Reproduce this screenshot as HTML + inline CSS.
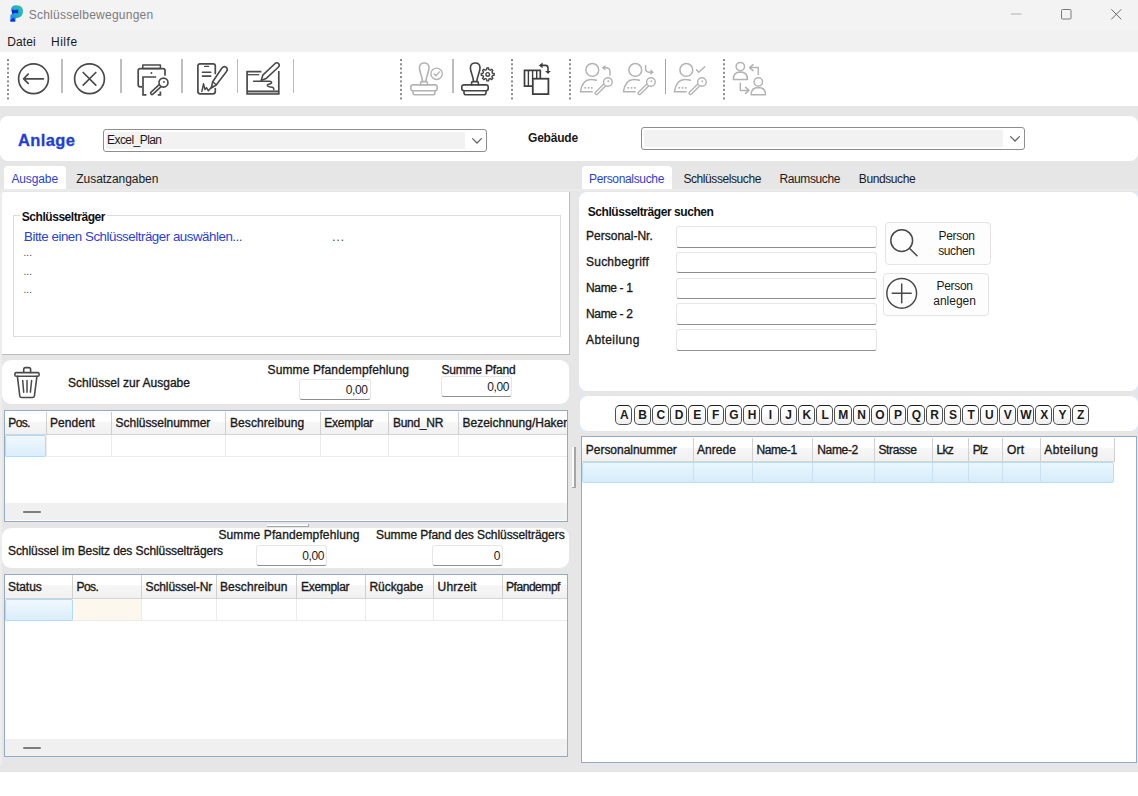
<!DOCTYPE html>
<html lang="de"><head><meta charset="utf-8"><title>Schlüsselbewegungen</title><style>
html,body{margin:0;padding:0;background:#fff;}
body{width:1138px;height:796px;position:relative;overflow:hidden;font-family:'Liberation Sans', sans-serif;}
#app div,#app span,#app svg{position:absolute;box-sizing:border-box;}
#app span{white-space:nowrap;line-height:1;}
#app svg{overflow:visible;}
</style></head><body><div id="app">
<div style="left:0px;top:0px;width:1138px;height:52px;background:#f3f3f3;"></div>
<div style="left:0px;top:30.8px;width:1138px;height:21.2px;background:#f1f1f1;"></div>
<div style="left:0px;top:52px;width:1138px;height:53.5px;background:#fff;"></div>
<div style="left:0px;top:105.5px;width:1138px;height:666.2px;background:#e6e6e6;"></div>
<div style="left:61.05px;top:58.6px;width:1.5px;height:34.9px;background:#bdbdbd;"></div>
<div style="left:120.15px;top:58.6px;width:1.5px;height:34.9px;background:#bdbdbd;"></div>
<div style="left:181.25px;top:58.6px;width:1.5px;height:34.9px;background:#bdbdbd;"></div>
<div style="left:236.85px;top:58.6px;width:1.5px;height:34.9px;background:#bdbdbd;"></div>
<div style="left:292.75px;top:58.6px;width:1.5px;height:34.9px;background:#bdbdbd;"></div>
<div style="left:452.45px;top:58.6px;width:1.5px;height:34.9px;background:#bdbdbd;"></div>
<div style="left:664.6px;top:58.8px;width:1.3px;height:35px;background:#a4a4a4;"></div>
<div style="left:0px;top:116.2px;width:1138px;height:45px;background:#fff;border-radius:8px;"></div>
<div style="left:103px;top:129.1px;width:383.9px;height:22.8px;background:#fff;border:1.3px solid #8e8e8e;border-radius:3px;"></div>
<div style="left:106.3px;top:132.4px;width:358.9px;height:16.200000000000003px;background:#f2f2f2;"></div>
<div style="left:641px;top:127.05px;width:383.9px;height:22.8px;background:#fff;border:1.3px solid #8e8e8e;border-radius:3px;"></div>
<div style="left:644.3px;top:130.35px;width:358.9000000000001px;height:16.200000000000003px;background:#f2f2f2;"></div>
<div style="left:4.4px;top:166px;width:61.4px;height:23.3px;background:#fff;border-radius:4px 4px 0 0;"></div>
<div style="left:0px;top:189.3px;width:1138px;height:2.2px;background:#ebebeb;"></div>
<div style="left:0px;top:191.5px;width:2.4px;height:573px;background:#ededed;"></div>
<div style="left:2px;top:191.5px;width:567.5px;height:163px;background:#fff;border-right:1.5px solid #bdbdbd;border-bottom:1.5px solid #bdbdbd;border-radius:2px 0 0 0;"></div>
<div style="left:13px;top:215px;width:548px;height:122px;border:1px solid #dcdcdc;"></div>
<div style="left:20px;top:212px;width:87px;height:10px;background:#fff;"></div>
<div style="left:2px;top:360px;width:567px;height:44px;background:#fff;border-radius:9px;"></div>
<div style="left:299px;top:378.8px;width:71.5px;height:21.5px;background:#fff;border:1.2px solid #e6e6e6;border-bottom:1.4px solid #8e8e8e;border-radius:3px;"></div>
<div style="left:440.8px;top:376px;width:71px;height:20.5px;background:#fff;border:1.2px solid #e6e6e6;border-bottom:1.4px solid #8e8e8e;border-radius:3px;"></div>
<div style="left:3.7px;top:410.3px;width:564.5px;height:111.4px;background:#fff;border:1.3px solid #93abc9;"></div>
<div style="left:5px;top:411.5px;width:562px;height:23px;background:linear-gradient(#ffffff 0%,#ffffff 42%,#f6f6f6 46%,#f1f1f1 100%);border-bottom:1px solid #d4d4d4;"></div>
<div style="left:5px;top:455.5px;width:562px;height:1px;background:#ececec;"></div>
<div style="left:45.5px;top:411.5px;width:1px;height:23px;background:#d0d0d0;"></div>
<div style="left:45.5px;top:434.5px;width:1px;height:22px;background:#ececec;"></div>
<div style="left:110.8px;top:411.5px;width:1px;height:23px;background:#d0d0d0;"></div>
<div style="left:110.8px;top:434.5px;width:1px;height:22px;background:#ececec;"></div>
<div style="left:225.1px;top:411.5px;width:1px;height:23px;background:#d0d0d0;"></div>
<div style="left:225.1px;top:434.5px;width:1px;height:22px;background:#ececec;"></div>
<div style="left:319.5px;top:411.5px;width:1px;height:23px;background:#d0d0d0;"></div>
<div style="left:319.5px;top:434.5px;width:1px;height:22px;background:#ececec;"></div>
<div style="left:387.9px;top:411.5px;width:1px;height:23px;background:#d0d0d0;"></div>
<div style="left:387.9px;top:434.5px;width:1px;height:22px;background:#ececec;"></div>
<div style="left:458.0px;top:411.5px;width:1px;height:23px;background:#d0d0d0;"></div>
<div style="left:458.0px;top:434.5px;width:1px;height:22px;background:#ececec;"></div>
<div style="left:5px;top:434.5px;width:40.5px;height:22px;background:linear-gradient(#eff8fe,#dbeefb);border:1px solid #b0dbf5;border-radius:2px;"></div>
<div style="left:5px;top:502.9px;width:562px;height:17.6px;background:#f0f0f0;"></div>
<div style="left:23px;top:511.1px;width:18.2px;height:2px;background:#7e7e7e;border-radius:1px;"></div>
<div style="left:267px;top:524.1px;width:41.8px;height:2.7px;background:#a6a6a6;"></div>
<div style="left:267px;top:524.1px;width:40.6px;height:1.5px;background:#fafafa;"></div>
<div style="left:572px;top:446.9px;width:4.1px;height:40.9px;background:#a6a6a6;"></div>
<div style="left:572px;top:446.9px;width:2.3px;height:39.8px;background:#fafafa;"></div>
<div style="left:2px;top:527.8px;width:567px;height:40.4px;background:#fff;border-radius:9px;"></div>
<div style="left:256px;top:545px;width:71px;height:20.5px;background:#fff;border:1.2px solid #e6e6e6;border-bottom:1.4px solid #8e8e8e;border-radius:3px;"></div>
<div style="left:432px;top:545px;width:71px;height:20.5px;background:#fff;border:1.2px solid #e6e6e6;border-bottom:1.4px solid #8e8e8e;border-radius:3px;"></div>
<div style="left:3.7px;top:574.0999999999999px;width:564.5px;height:183.4px;background:#fff;border:1.3px solid #93abc9;"></div>
<div style="left:5px;top:575.3px;width:562px;height:23.5px;background:linear-gradient(#ffffff 0%,#ffffff 42%,#f6f6f6 46%,#f1f1f1 100%);border-bottom:1px solid #d4d4d4;"></div>
<div style="left:5px;top:619.8px;width:562px;height:1px;background:#ececec;"></div>
<div style="left:73px;top:598.8px;width:67.5px;height:21px;background:#fdf8ee;"></div>
<div style="left:72.0px;top:575.3px;width:1px;height:23.5px;background:#d0d0d0;"></div>
<div style="left:72.0px;top:598.8px;width:1px;height:22px;background:#ececec;"></div>
<div style="left:140.5px;top:575.3px;width:1px;height:23.5px;background:#d0d0d0;"></div>
<div style="left:140.5px;top:598.8px;width:1px;height:22px;background:#ececec;"></div>
<div style="left:215.8px;top:575.3px;width:1px;height:23.5px;background:#d0d0d0;"></div>
<div style="left:215.8px;top:598.8px;width:1px;height:22px;background:#ececec;"></div>
<div style="left:296.3px;top:575.3px;width:1px;height:23.5px;background:#d0d0d0;"></div>
<div style="left:296.3px;top:598.8px;width:1px;height:22px;background:#ececec;"></div>
<div style="left:364.8px;top:575.3px;width:1px;height:23.5px;background:#d0d0d0;"></div>
<div style="left:364.8px;top:598.8px;width:1px;height:22px;background:#ececec;"></div>
<div style="left:433.2px;top:575.3px;width:1px;height:23.5px;background:#d0d0d0;"></div>
<div style="left:433.2px;top:598.8px;width:1px;height:22px;background:#ececec;"></div>
<div style="left:501.7px;top:575.3px;width:1px;height:23.5px;background:#d0d0d0;"></div>
<div style="left:501.7px;top:598.8px;width:1px;height:22px;background:#ececec;"></div>
<div style="left:5px;top:598.8px;width:67.5px;height:22px;background:linear-gradient(#eff8fe,#dbeefb);border:1px solid #b0dbf5;border-radius:2px;"></div>
<div style="left:5px;top:738.6999999999999px;width:562px;height:17.6px;background:#f0f0f0;"></div>
<div style="left:23px;top:746.9px;width:18.2px;height:2px;background:#7e7e7e;border-radius:1px;"></div>
<div style="left:582.4px;top:166px;width:89.6px;height:23.3px;background:#fff;border-radius:4px 4px 0 0;"></div>
<div style="left:579.3px;top:191.5px;width:558.7px;height:199.6px;background:#dde9f8;"></div>
<div style="left:579.3px;top:191.5px;width:558.7px;height:199.6px;background:#fff;border-radius:8px;"></div>
<div style="left:676px;top:225.8px;width:201.3px;height:21.8px;background:#fff;border:1.2px solid #e6e6e6;border-bottom:1.4px solid #8e8e8e;border-radius:3px;"></div>
<div style="left:676px;top:251.65px;width:201.3px;height:21.8px;background:#fff;border:1.2px solid #e6e6e6;border-bottom:1.4px solid #8e8e8e;border-radius:3px;"></div>
<div style="left:676px;top:277.5px;width:201.3px;height:21.8px;background:#fff;border:1.2px solid #e6e6e6;border-bottom:1.4px solid #8e8e8e;border-radius:3px;"></div>
<div style="left:676px;top:303.35px;width:201.3px;height:21.8px;background:#fff;border:1.2px solid #e6e6e6;border-bottom:1.4px solid #8e8e8e;border-radius:3px;"></div>
<div style="left:676px;top:329.20000000000005px;width:201.3px;height:21.8px;background:#fff;border:1.2px solid #e6e6e6;border-bottom:1.4px solid #8e8e8e;border-radius:3px;"></div>
<div style="left:884.7px;top:222.4px;width:106.5px;height:42.6px;background:#fdfdfd;border:1px solid #e4e4e4;border-radius:4px;"></div>
<div style="left:882.6px;top:272.5px;width:106.2px;height:43px;background:#fdfdfd;border:1px solid #e4e4e4;border-radius:4px;"></div>
<div style="left:579.8px;top:396.1px;width:558.2px;height:34.6px;background:#dde9f8;"></div>
<div style="left:579.8px;top:396.1px;width:558.2px;height:34.6px;background:#fff;border-radius:8px;"></div>
<div style="left:615.3px;top:404.7px;width:17.2px;height:20.4px;background:linear-gradient(#ffffff 30%,#eeeeee);border:1.5px solid #505050;border-top-color:#1c1c1c;border-radius:5px;"></div>
<div style="left:633.55px;top:404.7px;width:17.2px;height:20.4px;background:linear-gradient(#ffffff 30%,#eeeeee);border:1.5px solid #505050;border-top-color:#1c1c1c;border-radius:5px;"></div>
<div style="left:651.81px;top:404.7px;width:17.2px;height:20.4px;background:linear-gradient(#ffffff 30%,#eeeeee);border:1.5px solid #505050;border-top-color:#1c1c1c;border-radius:5px;"></div>
<div style="left:670.06px;top:404.7px;width:17.2px;height:20.4px;background:linear-gradient(#ffffff 30%,#eeeeee);border:1.5px solid #505050;border-top-color:#1c1c1c;border-radius:5px;"></div>
<div style="left:688.32px;top:404.7px;width:17.2px;height:20.4px;background:linear-gradient(#ffffff 30%,#eeeeee);border:1.5px solid #505050;border-top-color:#1c1c1c;border-radius:5px;"></div>
<div style="left:706.57px;top:404.7px;width:17.2px;height:20.4px;background:linear-gradient(#ffffff 30%,#eeeeee);border:1.5px solid #505050;border-top-color:#1c1c1c;border-radius:5px;"></div>
<div style="left:724.83px;top:404.7px;width:17.2px;height:20.4px;background:linear-gradient(#ffffff 30%,#eeeeee);border:1.5px solid #505050;border-top-color:#1c1c1c;border-radius:5px;"></div>
<div style="left:743.08px;top:404.7px;width:17.2px;height:20.4px;background:linear-gradient(#ffffff 30%,#eeeeee);border:1.5px solid #505050;border-top-color:#1c1c1c;border-radius:5px;"></div>
<div style="left:761.34px;top:404.7px;width:17.2px;height:20.4px;background:linear-gradient(#ffffff 30%,#eeeeee);border:1.5px solid #505050;border-top-color:#1c1c1c;border-radius:5px;"></div>
<div style="left:779.59px;top:404.7px;width:17.2px;height:20.4px;background:linear-gradient(#ffffff 30%,#eeeeee);border:1.5px solid #505050;border-top-color:#1c1c1c;border-radius:5px;"></div>
<div style="left:797.85px;top:404.7px;width:17.2px;height:20.4px;background:linear-gradient(#ffffff 30%,#eeeeee);border:1.5px solid #505050;border-top-color:#1c1c1c;border-radius:5px;"></div>
<div style="left:816.1px;top:404.7px;width:17.2px;height:20.4px;background:linear-gradient(#ffffff 30%,#eeeeee);border:1.5px solid #505050;border-top-color:#1c1c1c;border-radius:5px;"></div>
<div style="left:834.36px;top:404.7px;width:17.2px;height:20.4px;background:linear-gradient(#ffffff 30%,#eeeeee);border:1.5px solid #505050;border-top-color:#1c1c1c;border-radius:5px;"></div>
<div style="left:852.62px;top:404.7px;width:17.2px;height:20.4px;background:linear-gradient(#ffffff 30%,#eeeeee);border:1.5px solid #505050;border-top-color:#1c1c1c;border-radius:5px;"></div>
<div style="left:870.87px;top:404.7px;width:17.2px;height:20.4px;background:linear-gradient(#ffffff 30%,#eeeeee);border:1.5px solid #505050;border-top-color:#1c1c1c;border-radius:5px;"></div>
<div style="left:889.12px;top:404.7px;width:17.2px;height:20.4px;background:linear-gradient(#ffffff 30%,#eeeeee);border:1.5px solid #505050;border-top-color:#1c1c1c;border-radius:5px;"></div>
<div style="left:907.38px;top:404.7px;width:17.2px;height:20.4px;background:linear-gradient(#ffffff 30%,#eeeeee);border:1.5px solid #505050;border-top-color:#1c1c1c;border-radius:5px;"></div>
<div style="left:925.63px;top:404.7px;width:17.2px;height:20.4px;background:linear-gradient(#ffffff 30%,#eeeeee);border:1.5px solid #505050;border-top-color:#1c1c1c;border-radius:5px;"></div>
<div style="left:943.89px;top:404.7px;width:17.2px;height:20.4px;background:linear-gradient(#ffffff 30%,#eeeeee);border:1.5px solid #505050;border-top-color:#1c1c1c;border-radius:5px;"></div>
<div style="left:962.14px;top:404.7px;width:17.2px;height:20.4px;background:linear-gradient(#ffffff 30%,#eeeeee);border:1.5px solid #505050;border-top-color:#1c1c1c;border-radius:5px;"></div>
<div style="left:980.4px;top:404.7px;width:17.2px;height:20.4px;background:linear-gradient(#ffffff 30%,#eeeeee);border:1.5px solid #505050;border-top-color:#1c1c1c;border-radius:5px;"></div>
<div style="left:998.65px;top:404.7px;width:17.2px;height:20.4px;background:linear-gradient(#ffffff 30%,#eeeeee);border:1.5px solid #505050;border-top-color:#1c1c1c;border-radius:5px;"></div>
<div style="left:1016.91px;top:404.7px;width:17.2px;height:20.4px;background:linear-gradient(#ffffff 30%,#eeeeee);border:1.5px solid #505050;border-top-color:#1c1c1c;border-radius:5px;"></div>
<div style="left:1035.16px;top:404.7px;width:17.2px;height:20.4px;background:linear-gradient(#ffffff 30%,#eeeeee);border:1.5px solid #505050;border-top-color:#1c1c1c;border-radius:5px;"></div>
<div style="left:1053.42px;top:404.7px;width:17.2px;height:20.4px;background:linear-gradient(#ffffff 30%,#eeeeee);border:1.5px solid #505050;border-top-color:#1c1c1c;border-radius:5px;"></div>
<div style="left:1071.67px;top:404.7px;width:17.2px;height:20.4px;background:linear-gradient(#ffffff 30%,#eeeeee);border:1.5px solid #505050;border-top-color:#1c1c1c;border-radius:5px;"></div>
<div style="left:580.7px;top:436.40000000000003px;width:556.5px;height:326.4px;background:#fff;border:1.3px solid #93abc9;"></div>
<div style="left:582px;top:437.6px;width:532px;height:24px;background:linear-gradient(#ffffff 0%,#ffffff 42%,#f6f6f6 46%,#f1f1f1 100%);border-bottom:1px solid #d4d4d4;"></div>
<div style="left:582px;top:461.6px;width:532px;height:21px;background:linear-gradient(#eaf6fd,#d6ecfa);border:1px solid #b6def5;border-radius:2px;"></div>
<div style="left:692.5px;top:437.6px;width:1px;height:24px;background:#d0d0d0;"></div>
<div style="left:692.5px;top:461.6px;width:1px;height:21px;background:#c8e2f3;"></div>
<div style="left:751.5px;top:437.6px;width:1px;height:24px;background:#d0d0d0;"></div>
<div style="left:751.5px;top:461.6px;width:1px;height:21px;background:#c8e2f3;"></div>
<div style="left:812.3px;top:437.6px;width:1px;height:24px;background:#d0d0d0;"></div>
<div style="left:812.3px;top:461.6px;width:1px;height:21px;background:#c8e2f3;"></div>
<div style="left:873.5px;top:437.6px;width:1px;height:24px;background:#d0d0d0;"></div>
<div style="left:873.5px;top:461.6px;width:1px;height:21px;background:#c8e2f3;"></div>
<div style="left:931.7px;top:437.6px;width:1px;height:24px;background:#d0d0d0;"></div>
<div style="left:931.7px;top:461.6px;width:1px;height:21px;background:#c8e2f3;"></div>
<div style="left:967.8px;top:437.6px;width:1px;height:24px;background:#d0d0d0;"></div>
<div style="left:967.8px;top:461.6px;width:1px;height:21px;background:#c8e2f3;"></div>
<div style="left:1001.8px;top:437.6px;width:1px;height:24px;background:#d0d0d0;"></div>
<div style="left:1001.8px;top:461.6px;width:1px;height:21px;background:#c8e2f3;"></div>
<div style="left:1039.8px;top:437.6px;width:1px;height:24px;background:#d0d0d0;"></div>
<div style="left:1039.8px;top:461.6px;width:1px;height:21px;background:#c8e2f3;"></div>
<div style="left:1113.5px;top:437.6px;width:1px;height:24px;background:#d0d0d0;"></div>
<svg style="left:9.5px;top:4.5px" width="14" height="18" viewBox="0 0 14 18" ><defs><linearGradient id="pg" x1="1" y1="0" x2="0" y2="1"><stop offset="0" stop-color="#35c4a0"/><stop offset="0.45" stop-color="#25b0c0"/><stop offset="0.8" stop-color="#1c90ec"/><stop offset="1" stop-color="#1a6cf0"/></linearGradient></defs>
<g transform="scale(0.955 0.955)"><path d="M1.2 3.6 Q2 0.6 6 0.3 Q10.4 0 12.6 2.6 Q14.2 5 13.4 8.6 Q12.2 12.6 8.4 13.4 L6.2 13.6 L5.6 17.4 L0.4 17.4 L0.4 10.6 L2.2 9.4 Z" fill="url(#pg)"/>
<path d="M1.6 4.6 L4.6 5.2 L8.6 4.6 L8.6 8.6 L4.6 8.4 L2.4 9.6 Z" fill="#0d2be2"/>
<path d="M0.4 17.4 L5.6 17.4 L3.9 13.2 L0.4 16 Z" fill="#0d2be2"/></g></svg>
<svg style="left:1011px;top:13px" width="11" height="2" viewBox="0 0 11 2" ><path d="M0 1 H10.5" stroke="#b0b0b0" stroke-width="1"/></svg>
<svg style="left:1061px;top:9px" width="11" height="11" viewBox="0 0 11 11" ><rect x="0.5" y="0.5" width="9.5" height="9.5" rx="1" fill="none" stroke="#7a7a7a" stroke-width="1"/></svg>
<svg style="left:1111px;top:9px" width="11" height="11" viewBox="0 0 11 11" ><path d="M0.3 0.3 L10.3 10.3 M10.3 0.3 L0.3 10.3" stroke="#6a6a6a" stroke-width="1" fill="none"/></svg>
<svg style="left:6.8px;top:58.8px" width="2" height="41" viewBox="0 0 2 41" ><rect x="0" y="0.00" width="2" height="2" fill="#8c8c8c"/><rect x="0" y="4.27" width="2" height="2" fill="#8c8c8c"/><rect x="0" y="8.54" width="2" height="2" fill="#8c8c8c"/><rect x="0" y="12.81" width="2" height="2" fill="#8c8c8c"/><rect x="0" y="17.08" width="2" height="2" fill="#8c8c8c"/><rect x="0" y="21.35" width="2" height="2" fill="#8c8c8c"/><rect x="0" y="25.62" width="2" height="2" fill="#8c8c8c"/><rect x="0" y="29.89" width="2" height="2" fill="#8c8c8c"/><rect x="0" y="34.16" width="2" height="2" fill="#8c8c8c"/><rect x="0" y="38.43" width="2" height="2" fill="#8c8c8c"/></svg>
<svg style="left:400px;top:58.8px" width="2" height="41" viewBox="0 0 2 41" ><rect x="0" y="0.00" width="2" height="2" fill="#8c8c8c"/><rect x="0" y="4.27" width="2" height="2" fill="#8c8c8c"/><rect x="0" y="8.54" width="2" height="2" fill="#8c8c8c"/><rect x="0" y="12.81" width="2" height="2" fill="#8c8c8c"/><rect x="0" y="17.08" width="2" height="2" fill="#8c8c8c"/><rect x="0" y="21.35" width="2" height="2" fill="#8c8c8c"/><rect x="0" y="25.62" width="2" height="2" fill="#8c8c8c"/><rect x="0" y="29.89" width="2" height="2" fill="#8c8c8c"/><rect x="0" y="34.16" width="2" height="2" fill="#8c8c8c"/><rect x="0" y="38.43" width="2" height="2" fill="#8c8c8c"/></svg>
<svg style="left:510.6px;top:58.8px" width="2" height="41" viewBox="0 0 2 41" ><rect x="0" y="0.00" width="2" height="2" fill="#8c8c8c"/><rect x="0" y="4.27" width="2" height="2" fill="#8c8c8c"/><rect x="0" y="8.54" width="2" height="2" fill="#8c8c8c"/><rect x="0" y="12.81" width="2" height="2" fill="#8c8c8c"/><rect x="0" y="17.08" width="2" height="2" fill="#8c8c8c"/><rect x="0" y="21.35" width="2" height="2" fill="#8c8c8c"/><rect x="0" y="25.62" width="2" height="2" fill="#8c8c8c"/><rect x="0" y="29.89" width="2" height="2" fill="#8c8c8c"/><rect x="0" y="34.16" width="2" height="2" fill="#8c8c8c"/><rect x="0" y="38.43" width="2" height="2" fill="#8c8c8c"/></svg>
<svg style="left:569.2px;top:58.8px" width="2" height="41" viewBox="0 0 2 41" ><rect x="0" y="0.00" width="2" height="2" fill="#8c8c8c"/><rect x="0" y="4.27" width="2" height="2" fill="#8c8c8c"/><rect x="0" y="8.54" width="2" height="2" fill="#8c8c8c"/><rect x="0" y="12.81" width="2" height="2" fill="#8c8c8c"/><rect x="0" y="17.08" width="2" height="2" fill="#8c8c8c"/><rect x="0" y="21.35" width="2" height="2" fill="#8c8c8c"/><rect x="0" y="25.62" width="2" height="2" fill="#8c8c8c"/><rect x="0" y="29.89" width="2" height="2" fill="#8c8c8c"/><rect x="0" y="34.16" width="2" height="2" fill="#8c8c8c"/><rect x="0" y="38.43" width="2" height="2" fill="#8c8c8c"/></svg>
<svg style="left:722.6px;top:58.8px" width="2" height="41" viewBox="0 0 2 41" ><rect x="0" y="0.00" width="2" height="2" fill="#8c8c8c"/><rect x="0" y="4.27" width="2" height="2" fill="#8c8c8c"/><rect x="0" y="8.54" width="2" height="2" fill="#8c8c8c"/><rect x="0" y="12.81" width="2" height="2" fill="#8c8c8c"/><rect x="0" y="17.08" width="2" height="2" fill="#8c8c8c"/><rect x="0" y="21.35" width="2" height="2" fill="#8c8c8c"/><rect x="0" y="25.62" width="2" height="2" fill="#8c8c8c"/><rect x="0" y="29.89" width="2" height="2" fill="#8c8c8c"/><rect x="0" y="34.16" width="2" height="2" fill="#8c8c8c"/><rect x="0" y="38.43" width="2" height="2" fill="#8c8c8c"/></svg>
<svg style="left:17px;top:62px" width="34" height="34" viewBox="0 0 34 34" ><g fill="none" stroke="#4a4a4a" stroke-width="1.7" stroke-linecap="round" stroke-linejoin="round">
<circle cx="16.5" cy="16.8" r="14.9"/><path d="M6.6 16.8 H26.4 M11.2 12.2 L6.6 16.8 L11.2 21.4"/></g></svg>
<svg style="left:72.6px;top:62px" width="34" height="34" viewBox="0 0 34 34" ><g fill="none" stroke="#4a4a4a" stroke-width="1.7" stroke-linecap="round">
<circle cx="16.5" cy="16.8" r="14.9"/><path d="M10.2 10.5 L22.8 23.1 M22.8 10.5 L10.2 23.1"/></g></svg>
<svg style="left:136px;top:62px" width="36" height="36" viewBox="0 0 36 36" ><g fill="none" stroke="#4a4a4a" stroke-width="1.7" stroke-linejoin="round" stroke-linecap="round">
<rect x="6.8" y="3.0" width="17.6" height="3.4" stroke-width="1.5"/>
<path d="M5.6 24.8 H4.2 Q2.2 24.8 2.2 22.8 V8.6 Q2.2 6.6 4.2 6.6 H27 Q29 6.6 29 8.6 V13"/>
<circle cx="15.4" cy="11" r="0.95" fill="#4a4a4a" stroke="none"/>
<path d="M20.2 15 H7 V32.8 H10.4" stroke-linejoin="miter" stroke-linecap="butt"/>
<path d="M21.8 32.8 H24.4 V29.4" stroke-linejoin="miter" stroke-linecap="butt"/>
<path d="M25.51 22.42 L16.02 31.11" stroke="#4a4a4a" stroke-width="4.4" stroke-linecap="round"/><path d="M25.51 22.42 L16.02 31.11" stroke="#fff" stroke-width="1.20" stroke-linecap="round"/><circle cx="27.5" cy="20.6" r="4.5" fill="#fff" stroke="#4a4a4a" stroke-width="1.6"/><circle cx="27.9" cy="19.900000000000002" r="0.95" fill="#4a4a4a" stroke="none"/>
</g></svg>
<svg style="left:196px;top:61px" width="34" height="36" viewBox="0 0 34 36" ><g fill="none" stroke="#4a4a4a" stroke-width="1.7" stroke-linejoin="round" stroke-linecap="round">
<path d="M19.3 27.6 V30.6 Q19.3 32.9 17 32.9 H4.2 Q1.9 32.9 1.9 30.6 V5.1 Q1.9 2.8 4.2 2.8 H17 Q19.3 2.8 19.3 5.1 V12.4"/>
<path d="M8.6 5.4 H12.6" stroke-width="1.3"/>
<path d="M6.4 11.2 H14.8 M6.4 15.1 H14.8" stroke-width="1.6"/>
<path d="M5.9 30.4 L7.5 22.8 L9 28.6 L10.5 26.6 L12.4 29.8 L15.6 26" stroke-width="1.5"/>
<path d="M16.7 20.8 L26 7.0 Q27.8 4.7 30.1 6.1 Q32.2 7.9 30.7 10.3 L20.4 23.8 L15.3 27 Z" fill="#fff" stroke-width="1.6"/>
<path d="M16.7 20.8 L20.4 23.8" stroke-width="1.3"/>
</g></svg>
<svg style="left:245px;top:61px" width="36" height="36" viewBox="0 0 36 36" ><g fill="none" stroke="#4a4a4a" stroke-width="1.7" stroke-linejoin="miter" stroke-linecap="butt">
<rect x="2.1" y="30.2" width="31.7" height="2.9" fill="#b4b4b4" stroke="none"/>
<path d="M16.4 10.7 H2.1 V33 H33.8 V10"/>
<path d="M2.1 13.7 H14.2" stroke-width="1.3"/>
<path d="M2.1 30.2 H33.8" stroke-width="1.5"/>
<path d="M8.6 20.2 H24.4 Q27.2 20.4 26.4 22.2 Q25 23.3 23 23.5 Q21.6 24.3 23.2 25.4 Q25 26.2 27.4 26.2 Q29 26.8 28.8 28.6" stroke-width="1.5" stroke-linecap="round" stroke-linejoin="round"/>
<path d="M17.8 14.2 L30.1 2.5 Q32 1.0 33.6 2.6 Q35 4.4 33.5 6.0 L21 17.6 L16.2 19.4 Z" fill="#fff" stroke-width="1.6" stroke-linejoin="round"/>
</g></svg>
<svg style="left:410.2px;top:61px" width="36" height="36" viewBox="0 0 36 36" ><g fill="none" stroke="#b4b4b4" stroke-width="1.6" stroke-linejoin="round" stroke-linecap="round">
<path d="M12.5 20.4 C12.3 15 9.4 11 9.4 6.9 C9.4 3.5 11.6 2 14.2 2 C16.8 2 19 3.5 19 6.9 C19 11 16.1 15 15.9 20.4"/>
<path d="M10.6 24 V21.8 Q10.6 20.6 11.8 20.6 H16.2 Q17.4 20.6 17.4 21.8 V24"/>
<rect x="0.8" y="23.9" width="26.4" height="5.8" rx="2.2"/>
<path d="M3 30 V31.8 Q3 33.8 5 33.8 H23 Q25 33.8 25 31.8 V30"/>
<circle cx="26.6" cy="12.8" r="5.7" stroke-width="1.4"/><path d="M24.1 12.9 L26 14.8 L29.4 10.9" stroke-width="1.4"/>
</g></svg>
<svg style="left:461.3px;top:61px" width="36" height="36" viewBox="0 0 36 36" ><g fill="none" stroke="#454545" stroke-width="1.6" stroke-linejoin="round" stroke-linecap="round">
<path d="M12.5 20.4 C12.3 15 9.4 11 9.4 6.9 C9.4 3.5 11.6 2 14.2 2 C16.8 2 19 3.5 19 6.9 C19 11 16.1 15 15.9 20.4"/>
<path d="M10.6 24 V21.8 Q10.6 20.6 11.8 20.6 H16.2 Q17.4 20.6 17.4 21.8 V24"/>
<rect x="0.8" y="23.9" width="26.4" height="5.8" rx="2.2"/>
<path d="M3 30 V31.8 Q3 33.8 5 33.8 H23 Q25 33.8 25 31.8 V30"/>
<path d="M25.83 6.96 L27.57 6.96 L27.84 8.64 L29.26 9.22 L30.64 8.23 L31.87 9.46 L30.88 10.84 L31.46 12.26 L33.14 12.53 L33.14 14.27 L31.46 14.54 L30.88 15.96 L31.87 17.34 L30.64 18.57 L29.26 17.58 L27.84 18.16 L27.57 19.84 L25.83 19.84 L25.56 18.16 L24.14 17.58 L22.76 18.57 L21.53 17.34 L22.52 15.96 L21.94 14.54 L20.26 14.27 L20.26 12.53 L21.94 12.26 L22.52 10.84 L21.53 9.46 L22.76 8.23 L24.14 9.22 L25.56 8.64 Z" stroke-width="1.4"/><circle cx="26.7" cy="13.4" r="1.8" stroke-width="1.4"/>
</g></svg>
<svg style="left:523px;top:62px" width="30" height="36" viewBox="0 0 30 36" ><g fill="none" stroke="#3e3e3e" stroke-width="1.7" stroke-linejoin="miter">
<path d="M9.8 24.2 H1.5 V8.4 H17.3 V16.7"/>
<path d="M5.4 8.4 V24.2 M9.6 8.4 V16.7 M13.7 8.4 V16.7" stroke-width="1.4"/>
<rect x="9.8" y="16.7" width="15.6" height="15.4" fill="#fff" stroke-width="1.8"/>
<path d="M18.4 3.4 H22.4 Q25 3.4 25 6 V9.4" stroke-linecap="butt" stroke-width="1.6"/>
<path d="M15.8 3.4 L19.6 0.6 V6.2 Z M22.1 9 H27.9 L25 12 Z" fill="#3e3e3e" stroke="none"/>
</g></svg>
<svg style="left:578.8px;top:61px" width="36" height="36" viewBox="0 0 36 36" ><g fill="none" stroke="#b4b4b4" stroke-width="1.5" stroke-linejoin="round" stroke-linecap="round">
<circle cx="13.3" cy="8.9" r="6.4"/>
<path d="M17.4 19.3 Q14.4 18.3 11.4 18.4 Q2.8 19 1.4 30.8 H13.2"/>
<path d="M6 26.8 H6.4 M9.4 26.8 H9.8 M12.6 26.8 H13" stroke-width="1.7"/>
<path d="M27.05 22.80 L17.34 32.21" stroke="#b4b4b4" stroke-width="4.0" stroke-linecap="round"/><path d="M27.05 22.80 L17.34 32.21" stroke="#fff" stroke-width="1.20" stroke-linecap="round"/><circle cx="28.9" cy="21" r="4.3" fill="#fff" stroke="#b4b4b4" stroke-width="1.4"/><circle cx="29.299999999999997" cy="20.3" r="0.95" fill="#b4b4b4" stroke="none"/>
<path d="M31 13.9 V10.8 Q31 6.8 27 6.8 H25.6"/><path d="M22.6 6.8 L26.4 4 V9.6 Z" fill="#b4b4b4" stroke="none"/>
</g></svg>
<svg style="left:621.6px;top:61px" width="36" height="36" viewBox="0 0 36 36" ><g fill="none" stroke="#b4b4b4" stroke-width="1.5" stroke-linejoin="round" stroke-linecap="round">
<circle cx="13.3" cy="8.9" r="6.4"/>
<path d="M17.4 19.3 Q14.4 18.3 11.4 18.4 Q2.8 19 1.4 30.8 H13.2"/>
<path d="M6 26.8 H6.4 M9.4 26.8 H9.8 M12.6 26.8 H13" stroke-width="1.7"/>
<path d="M27.05 22.80 L17.34 32.21" stroke="#b4b4b4" stroke-width="4.0" stroke-linecap="round"/><path d="M27.05 22.80 L17.34 32.21" stroke="#fff" stroke-width="1.20" stroke-linecap="round"/><circle cx="28.9" cy="21" r="4.3" fill="#fff" stroke="#b4b4b4" stroke-width="1.4"/><circle cx="29.299999999999997" cy="20.3" r="0.95" fill="#b4b4b4" stroke="none"/>
<path d="M23.6 4.4 V7.6 Q23.6 11.2 27.2 11.2 H29"/><path d="M32 11.2 L28.4 8.3 V14.1 Z" fill="#b4b4b4" stroke="none"/>
</g></svg>
<svg style="left:673.2px;top:61px" width="36" height="36" viewBox="0 0 36 36" ><g fill="none" stroke="#b4b4b4" stroke-width="1.5" stroke-linejoin="round" stroke-linecap="round">
<circle cx="13.3" cy="8.9" r="6.4"/>
<path d="M17.4 19.3 Q14.4 18.3 11.4 18.4 Q2.8 19 1.4 30.8 H13.2"/>
<path d="M6 26.8 H6.4 M9.4 26.8 H9.8 M12.6 26.8 H13" stroke-width="1.7"/>
<path d="M27.05 22.80 L17.34 32.21" stroke="#b4b4b4" stroke-width="4.0" stroke-linecap="round"/><path d="M27.05 22.80 L17.34 32.21" stroke="#fff" stroke-width="1.20" stroke-linecap="round"/><circle cx="28.9" cy="21" r="4.3" fill="#fff" stroke="#b4b4b4" stroke-width="1.4"/><circle cx="29.299999999999997" cy="20.3" r="0.95" fill="#b4b4b4" stroke="none"/>
<path d="M23.5 8.9 L25.9 11.2 L31.7 5.7"/>
</g></svg>
<svg style="left:731px;top:61px" width="38" height="36" viewBox="0 0 38 36" ><g fill="none" stroke="#b4b4b4" stroke-width="1.5" stroke-linejoin="round" stroke-linecap="round">
<circle cx="9.3" cy="5.6" r="4.2"/>
<path d="M2.3 18.4 Q2.3 11.2 9.4 11.1 Q16.5 11.2 16.5 18.4 Z"/>
<circle cx="27.3" cy="20.9" r="4.2"/>
<path d="M20.1 33.7 Q20.1 26.5 27.3 26.4 Q34.5 26.5 34.5 33.7 Z"/>
<path d="M27.3 13.4 V6.6 H19 M22 3.6 L18.6 6.6 L22 9.6"/>
<path d="M9.3 22.2 V29.4 H17.6 M14.6 26.4 L18 29.4 L14.6 32.4"/>
</g></svg>
<svg style="left:472.3px;top:138.1px" width="10" height="6" viewBox="0 0 10 6" ><path d="M0.6 0.6 L5 5 L9.4 0.6" fill="none" stroke="#666" stroke-width="1.3" stroke-linecap="round"/></svg>
<svg style="left:1010.2px;top:136.1px" width="10" height="6" viewBox="0 0 10 6" ><path d="M0.6 0.6 L5 5 L9.4 0.6" fill="none" stroke="#666" stroke-width="1.3" stroke-linecap="round"/></svg>
<svg style="left:13px;top:366px" width="28" height="33" viewBox="0 0 28 33" ><g fill="none" stroke="#4a4a4a" stroke-width="1.6" stroke-linejoin="round" stroke-linecap="round">
<path d="M10.7 6.4 V3.4 Q10.7 1.6 12.5 1.6 H15.8 Q17.6 1.6 17.6 3.4 V6.4"/>
<rect x="1.9" y="6.6" width="24.2" height="3.6" rx="1.3"/>
<path d="M4.4 10.4 L6.8 30 Q7 31.5 8.6 31.5 H19.6 Q21.2 31.5 21.4 30 L23.9 10.4"/>
<path d="M9.7 14.6 L10.7 26.2 M14 14.6 V26.2 M18.6 14.6 L17.4 26.2" stroke-width="1.5"/>
</g></svg>
<svg style="left:889px;top:227px" width="32" height="32" viewBox="0 0 32 32" ><g fill="none" stroke="#4a4a4a" stroke-width="1.5" stroke-linecap="round"><circle cx="12.7" cy="13.6" r="10.9"/><path d="M20.4 21.3 L28 28.8"/></g></svg>
<svg style="left:885px;top:277px" width="34" height="34" viewBox="0 0 34 34" ><g fill="none" stroke="#4a4a4a" stroke-width="1.5" stroke-linecap="round"><circle cx="16.7" cy="16.3" r="14.9"/><path d="M16.7 6.9 V25.7 M7.2 16.3 H26.2"/></g></svg>
<span style="left:28.70px;top:8.79px;font-size:12px;color:#7c7c7c;letter-spacing:0.242px;">Schlüsselbewegungen</span>
<span style="left:7.20px;top:35.69px;font-size:12px;color:#1a1a1a;letter-spacing:0.097px;">Datei</span>
<span style="left:51.00px;top:35.69px;font-size:12px;color:#1a1a1a;letter-spacing:0.517px;">Hilfe</span>
<span style="left:18.00px;top:131.88px;font-size:16.5px;color:#1f3fd6;font-weight:700;letter-spacing:0.381px;-webkit-text-stroke:0.3px #1f3fd6;">Anlage</span>
<span style="left:107.00px;top:134.29px;font-size:12px;color:#1a1a1a;letter-spacing:-0.555px;">Excel_Plan</span>
<span style="left:528.00px;top:131.89px;font-size:12px;color:#1a1a1a;font-weight:700;letter-spacing:-0.194px;">Gebäude</span>
<span style="left:11.40px;top:172.99px;font-size:12px;color:#2a3fd8;letter-spacing:-0.111px;">Ausgabe</span>
<span style="left:76.30px;top:172.99px;font-size:12px;color:#1a1a1a;letter-spacing:-0.056px;">Zusatzangaben</span>
<span style="left:21.80px;top:210.79px;font-size:12px;color:#111;font-weight:700;letter-spacing:-0.456px;">Schlüsselträger</span>
<span style="left:23.50px;top:233.18px;font-size:10px;color:#444;letter-spacing:0.052px;">...</span>
<span style="left:24.00px;top:230.07px;font-size:13.33px;color:#2a3fd8;letter-spacing:-0.477px;">Bitte einen Schlüsselträger auswählen...</span>
<span style="left:331.90px;top:230.37px;font-size:13.33px;color:#555;letter-spacing:0.63px;">...</span>
<span style="left:23.50px;top:248.38px;font-size:10px;color:#444;letter-spacing:0.052px;">...</span>
<span style="left:23.50px;top:267.38px;font-size:10px;color:#444;letter-spacing:0.052px;">...</span>
<span style="left:23.50px;top:285.38px;font-size:10px;color:#444;letter-spacing:0.052px;">...</span>
<span style="left:68.00px;top:376.79px;font-size:12px;color:#1a1a1a;letter-spacing:0.028px;-webkit-text-stroke:0.33px #1a1a1a;">Schlüssel zur Ausgabe</span>
<span style="left:267.50px;top:363.99px;font-size:12px;color:#1a1a1a;letter-spacing:0.131px;-webkit-text-stroke:0.33px #1a1a1a;">Summe Pfandempfehlung</span>
<span style="left:441.40px;top:363.99px;font-size:12px;color:#1a1a1a;letter-spacing:-0.186px;-webkit-text-stroke:0.33px #1a1a1a;">Summe Pfand</span>
<span style="left:345.66px;top:384.49px;font-size:12px;color:#1a1a1a;letter-spacing:-0.34px;">0,00</span>
<span style="left:487.16px;top:381.29px;font-size:12px;color:#1a1a1a;letter-spacing:-0.34px;">0,00</span>
<span style="left:8.30px;top:416.59px;font-size:12px;color:#1a1a1a;letter-spacing:-0.629px;-webkit-text-stroke:0.33px #1a1a1a;">Pos.</span>
<span style="left:50.00px;top:416.59px;font-size:12px;color:#1a1a1a;letter-spacing:0.04px;-webkit-text-stroke:0.33px #1a1a1a;">Pendent</span>
<span style="left:115.60px;top:416.59px;font-size:12px;color:#1a1a1a;letter-spacing:-0.045px;-webkit-text-stroke:0.33px #1a1a1a;">Schlüsselnummer</span>
<span style="left:230.00px;top:416.59px;font-size:12px;color:#1a1a1a;letter-spacing:0.076px;-webkit-text-stroke:0.33px #1a1a1a;">Beschreibung</span>
<span style="left:324.30px;top:416.59px;font-size:12px;color:#1a1a1a;letter-spacing:-0.236px;-webkit-text-stroke:0.33px #1a1a1a;">Exemplar</span>
<span style="left:393.00px;top:416.59px;font-size:12px;color:#1a1a1a;letter-spacing:-0.29px;-webkit-text-stroke:0.33px #1a1a1a;">Bund_NR</span>
<span style="left:462.50px;top:416.59px;font-size:12px;color:#1a1a1a;width:104.30px;overflow:hidden;height:15.6px;-webkit-text-stroke:0.33px #1a1a1a;">Bezeichnung/Haken</span>
<span style="left:8.00px;top:545.29px;font-size:12px;color:#1a1a1a;letter-spacing:-0.077px;-webkit-text-stroke:0.33px #1a1a1a;">Schlüssel im Besitz des Schlüsselträgers</span>
<span style="left:218.40px;top:529.49px;font-size:12px;color:#1a1a1a;letter-spacing:0.117px;-webkit-text-stroke:0.33px #1a1a1a;">Summe Pfandempfehlung</span>
<span style="left:376.00px;top:529.49px;font-size:12px;color:#1a1a1a;letter-spacing:-0.068px;-webkit-text-stroke:0.33px #1a1a1a;">Summe Pfand des Schlüsselträgers</span>
<span style="left:302.16px;top:550.29px;font-size:12px;color:#1a1a1a;letter-spacing:-0.34px;">0,00</span>
<span style="left:493.81px;top:550.29px;font-size:12px;color:#1a1a1a;">0</span>
<span style="left:8.00px;top:580.89px;font-size:12px;color:#1a1a1a;letter-spacing:-0.055px;-webkit-text-stroke:0.33px #1a1a1a;">Status</span>
<span style="left:76.50px;top:580.89px;font-size:12px;color:#1a1a1a;letter-spacing:-0.554px;-webkit-text-stroke:0.33px #1a1a1a;">Pos.</span>
<span style="left:145.50px;top:580.89px;font-size:12px;color:#1a1a1a;letter-spacing:-0.11px;-webkit-text-stroke:0.33px #1a1a1a;">Schlüssel-Nr</span>
<span style="left:220.00px;top:580.89px;font-size:12px;color:#1a1a1a;letter-spacing:0.062px;-webkit-text-stroke:0.33px #1a1a1a;">Beschreibun</span>
<span style="left:301.00px;top:580.89px;font-size:12px;color:#1a1a1a;letter-spacing:-0.311px;-webkit-text-stroke:0.33px #1a1a1a;">Exemplar</span>
<span style="left:369.50px;top:580.89px;font-size:12px;color:#1a1a1a;letter-spacing:-0.068px;-webkit-text-stroke:0.33px #1a1a1a;">Rückgabe</span>
<span style="left:437.60px;top:580.89px;font-size:12px;color:#1a1a1a;letter-spacing:0.126px;-webkit-text-stroke:0.33px #1a1a1a;">Uhrzeit</span>
<span style="left:506.00px;top:580.89px;font-size:12px;color:#1a1a1a;letter-spacing:-0.45px;-webkit-text-stroke:0.33px #1a1a1a;">Pfandempf</span>
<span style="left:589.00px;top:172.99px;font-size:12px;color:#2a3fd8;letter-spacing:-0.338px;">Personalsuche</span>
<span style="left:683.40px;top:172.99px;font-size:12px;color:#1a1a1a;letter-spacing:-0.414px;">Schlüsselsuche</span>
<span style="left:779.40px;top:172.99px;font-size:12px;color:#1a1a1a;letter-spacing:-0.381px;">Raumsuche</span>
<span style="left:858.80px;top:172.99px;font-size:12px;color:#1a1a1a;letter-spacing:-0.405px;">Bundsuche</span>
<span style="left:587.70px;top:206.29px;font-size:12px;color:#111;font-weight:700;letter-spacing:-0.44px;">Schlüsselträger suchen</span>
<span style="left:586.00px;top:230.49px;font-size:12px;color:#1a1a1a;letter-spacing:0.008px;-webkit-text-stroke:0.33px #1a1a1a;">Personal-Nr.</span>
<span style="left:586.00px;top:256.34px;font-size:12px;color:#1a1a1a;letter-spacing:0.227px;-webkit-text-stroke:0.33px #1a1a1a;">Suchbegriff</span>
<span style="left:586.00px;top:282.19px;font-size:12px;color:#1a1a1a;letter-spacing:-0.357px;-webkit-text-stroke:0.33px #1a1a1a;">Name - 1</span>
<span style="left:586.00px;top:308.04px;font-size:12px;color:#1a1a1a;letter-spacing:-0.357px;-webkit-text-stroke:0.33px #1a1a1a;">Name - 2</span>
<span style="left:586.00px;top:333.89px;font-size:12px;color:#1a1a1a;letter-spacing:0.417px;-webkit-text-stroke:0.33px #1a1a1a;">Abteilung</span>
<span style="left:938.60px;top:230.09px;font-size:12px;color:#1a1a1a;letter-spacing:-0.339px;">Person</span>
<span style="left:938.20px;top:244.99px;font-size:12px;color:#1a1a1a;letter-spacing:-0.384px;">suchen</span>
<span style="left:936.60px;top:280.29px;font-size:12px;color:#1a1a1a;letter-spacing:-0.339px;">Person</span>
<span style="left:933.30px;top:294.99px;font-size:12px;color:#1a1a1a;letter-spacing:-0.017px;">anlegen</span>
<span style="left:619.96px;top:409.19px;font-size:12px;color:#1c1c1c;font-weight:700;">A</span>
<span style="left:638.22px;top:409.19px;font-size:12px;color:#1c1c1c;font-weight:700;">B</span>
<span style="left:656.47px;top:409.19px;font-size:12px;color:#1c1c1c;font-weight:700;">C</span>
<span style="left:674.73px;top:409.19px;font-size:12px;color:#1c1c1c;font-weight:700;">D</span>
<span style="left:693.31px;top:409.19px;font-size:12px;color:#1c1c1c;font-weight:700;">E</span>
<span style="left:711.90px;top:409.19px;font-size:12px;color:#1c1c1c;font-weight:700;">F</span>
<span style="left:729.16px;top:409.19px;font-size:12px;color:#1c1c1c;font-weight:700;">G</span>
<span style="left:747.75px;top:409.19px;font-size:12px;color:#1c1c1c;font-weight:700;">H</span>
<span style="left:768.67px;top:409.19px;font-size:12px;color:#1c1c1c;font-weight:700;">I</span>
<span style="left:785.25px;top:409.19px;font-size:12px;color:#1c1c1c;font-weight:700;">J</span>
<span style="left:802.51px;top:409.19px;font-size:12px;color:#1c1c1c;font-weight:700;">K</span>
<span style="left:821.43px;top:409.19px;font-size:12px;color:#1c1c1c;font-weight:700;">L</span>
<span style="left:838.36px;top:409.19px;font-size:12px;color:#1c1c1c;font-weight:700;">M</span>
<span style="left:857.28px;top:409.19px;font-size:12px;color:#1c1c1c;font-weight:700;">N</span>
<span style="left:875.20px;top:409.19px;font-size:12px;color:#1c1c1c;font-weight:700;">O</span>
<span style="left:894.12px;top:409.19px;font-size:12px;color:#1c1c1c;font-weight:700;">P</span>
<span style="left:911.71px;top:409.19px;font-size:12px;color:#1c1c1c;font-weight:700;">Q</span>
<span style="left:930.30px;top:409.19px;font-size:12px;color:#1c1c1c;font-weight:700;">R</span>
<span style="left:948.88px;top:409.19px;font-size:12px;color:#1c1c1c;font-weight:700;">S</span>
<span style="left:967.47px;top:409.19px;font-size:12px;color:#1c1c1c;font-weight:700;">T</span>
<span style="left:985.06px;top:409.19px;font-size:12px;color:#1c1c1c;font-weight:700;">U</span>
<span style="left:1003.65px;top:409.19px;font-size:12px;color:#1c1c1c;font-weight:700;">V</span>
<span style="left:1020.25px;top:409.19px;font-size:12px;color:#1c1c1c;font-weight:700;">W</span>
<span style="left:1040.16px;top:409.19px;font-size:12px;color:#1c1c1c;font-weight:700;">X</span>
<span style="left:1058.41px;top:409.19px;font-size:12px;color:#1c1c1c;font-weight:700;">Y</span>
<span style="left:1077.00px;top:409.19px;font-size:12px;color:#1c1c1c;font-weight:700;">Z</span>
<span style="left:585.80px;top:443.69px;font-size:12px;color:#1a1a1a;letter-spacing:-0.027px;-webkit-text-stroke:0.33px #1a1a1a;">Personalnummer</span>
<span style="left:697.00px;top:443.69px;font-size:12px;color:#1a1a1a;letter-spacing:0.049px;-webkit-text-stroke:0.33px #1a1a1a;">Anrede</span>
<span style="left:756.40px;top:443.69px;font-size:12px;color:#1a1a1a;letter-spacing:-0.398px;-webkit-text-stroke:0.33px #1a1a1a;">Name-1</span>
<span style="left:817.30px;top:443.69px;font-size:12px;color:#1a1a1a;letter-spacing:-0.348px;-webkit-text-stroke:0.33px #1a1a1a;">Name-2</span>
<span style="left:878.50px;top:443.69px;font-size:12px;color:#1a1a1a;letter-spacing:-0.384px;-webkit-text-stroke:0.33px #1a1a1a;">Strasse</span>
<span style="left:936.40px;top:443.69px;font-size:12px;color:#1a1a1a;letter-spacing:-0.596px;-webkit-text-stroke:0.33px #1a1a1a;">Lkz</span>
<span style="left:972.70px;top:443.69px;font-size:12px;color:#1a1a1a;letter-spacing:-0.624px;-webkit-text-stroke:0.33px #1a1a1a;">Plz</span>
<span style="left:1007.00px;top:443.69px;font-size:12px;color:#1a1a1a;letter-spacing:0.209px;-webkit-text-stroke:0.33px #1a1a1a;">Ort</span>
<span style="left:1044.20px;top:443.69px;font-size:12px;color:#1a1a1a;letter-spacing:0.461px;-webkit-text-stroke:0.33px #1a1a1a;">Abteilung</span>
</div></body></html>
